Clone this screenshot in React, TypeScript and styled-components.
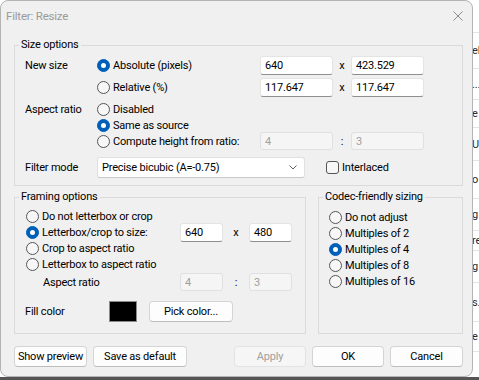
import React from "react";
import styled, { createGlobalStyle } from "styled-components";

const GlobalStyle = createGlobalStyle`
  html, body {
    margin: 0;
    padding: 0;
  }
  body {
    width: 479px;
    height: 380px;
    overflow: hidden;
    background: #ffffff;
    font-family: Roboto, "Noto Sans", sans-serif;
    font-size: 11px;
    letter-spacing: -0.2px;
    color: #000;
  }
`;

const Desktop = styled.div`
  position: relative;
  width: 479px;
  height: 380px;
  overflow: hidden;
`;

const Backdrop = styled.div`
  display: flex;
  flex-direction: column;
  height: 100%;
`;

const BackList = styled.div`
  flex: 1;
  display: flex;
  flex-direction: column;
  background: #fff;
`;

const BackRow = styled.div<{ $h: number }>`
  height: ${(p) => p.$h}px;
  flex: 0 0 auto;
  box-sizing: border-box;
  border-bottom: 1px solid #e4e4e4;
  padding-left: 472px;
  display: flex;
  align-items: center;
  white-space: nowrap;
  font-size: 11px;
  color: #2a2a2a;
`;

const Taskbar = styled.div`
  height: 3px;
  background: #555;
`;

const Window = styled.div`
  position: absolute;
  left: 0;
  top: 0;
  width: 473px;
  height: 377px;
  box-sizing: border-box;
  background: #f0f0f0;
  border: 1px solid #b4b4b4;
  border-radius: 8px;
  display: flex;
  flex-direction: column;
`;

const TitleBar = styled.div`
  height: 29px;
  display: flex;
  align-items: center;
  justify-content: space-between;
  padding: 0 9px 0 5px;
`;

const Title = styled.span`
  font-size: 11.5px;
  color: #9a9a9a;
`;

const Body = styled.div`
  padding: 7px 9px 0 13px;
  display: flex;
  flex-direction: column;
`;

const Group = styled.fieldset<{ $w?: number }>`
  margin: 0;
  padding: 0;
  min-width: 0;
  border: 1px solid #dadada;
  ${(p) => (p.$w ? `width: ${p.$w}px; flex: 0 0 auto;` : "flex: 1;")}
  box-sizing: border-box;
`;

const Legend = styled.legend`
  margin-left: 4px;
  padding: 0 2px;
  line-height: 16px;
`;

const Row = styled.div<{ $h: number; $mt?: number; $pl?: number }>`
  display: flex;
  align-items: center;
  height: ${(p) => p.$h}px;
  margin-top: ${(p) => p.$mt ?? 0}px;
  padding-left: ${(p) => p.$pl ?? 0}px;
`;

const Label = styled.span<{ $w: number; $pl?: number }>`
  flex: 0 0 ${(p) => p.$w}px;
  box-sizing: border-box;
  padding-left: ${(p) => p.$pl ?? 0}px;
  white-space: nowrap;
`;

const RadioWrap = styled.label<{ $w?: number }>`
  display: flex;
  align-items: center;
  gap: 3px;
  white-space: nowrap;
  ${(p) => (p.$w ? `flex: 0 0 ${p.$w}px;` : "")}
`;

const RadioDot = styled.span<{ $checked?: boolean }>`
  box-sizing: border-box;
  flex: 0 0 13px;
  width: 13px;
  height: 13px;
  border-radius: 50%;
  border: 1px solid ${(p) => (p.$checked ? "#005fb8" : "#555")};
  background: ${(p) => (p.$checked ? "#005fb8" : "#f7f7f7")};
  display: flex;
  align-items: center;
  justify-content: center;

  &::after {
    content: "";
    display: ${(p) => (p.$checked ? "block" : "none")};
    width: 5px;
    height: 5px;
    border-radius: 50%;
    background: #fff;
  }
`;

const CheckBox = styled.span`
  box-sizing: border-box;
  width: 13px;
  height: 13px;
  border: 1px solid #555;
  border-radius: 3px;
  background: #f7f7f7;
  flex: 0 0 13px;
`;

const Field = styled.input<{ $w: number }>`
  box-sizing: border-box;
  width: ${(p) => p.$w}px;
  height: 19px;
  margin: -2px 0;
  padding: 0 4px;
  font: inherit;
  letter-spacing: inherit;
  color: #000;
  background: #fff;
  border: 1px solid #e4e4e4;
  border-bottom-color: #8f8f8f;
  border-radius: 3px;
  outline: none;

  &:disabled {
    height: 18px;
    color: #a0a0a0;
    background: #f5f5f5;
    border-color: #e0e0e0;
  }
`;

const Sep = styled.span<{ $w: number }>`
  flex: 0 0 ${(p) => p.$w}px;
  text-align: center;
`;

const Select = styled.div`
  box-sizing: border-box;
  width: 208px;
  height: 21px;
  display: flex;
  align-items: center;
  justify-content: space-between;
  padding: 0 7px 0 4px;
  background: #fff;
  border: 1px solid #e0e0e0;
  border-bottom-color: #c8c8c8;
  border-radius: 3px;
`;

const CheckWrap = styled.label`
  display: flex;
  align-items: center;
  gap: 3px;
  margin-left: 21px;
`;

const Columns = styled.div`
  display: flex;
  gap: 12px;
  margin-top: 3px;
`;

const Swatch = styled.div`
  box-sizing: border-box;
  width: 28px;
  height: 21px;
  background: #000;
  border: 1px solid #8a8a8a;
  margin-left: 10px;
`;

const Button = styled.button<{ $w: number }>`
  box-sizing: border-box;
  width: ${(p) => p.$w}px;
  height: 21px;
  padding: 0;
  font: inherit;
  letter-spacing: inherit;
  color: #000;
  background: #fdfdfd;
  border: 1px solid #d4d4d4;
  border-bottom-color: #bdbdbd;
  border-radius: 4px;

  &:disabled {
    color: #a0a0a0;
    background: #f6f6f6;
    border-color: #e3e3e3;
  }
`;

const ButtonBar = styled.div`
  display: flex;
  align-items: center;
  gap: 6px;
  margin-top: 12px;
`;

const Spacer = styled.div`
  flex: 1;
`;

const Radio = ({ label, checked, w }: { label: string; checked?: boolean; w?: number }) => (
  <RadioWrap $w={w}>
    <RadioDot $checked={checked} />
    <span>{label}</span>
  </RadioWrap>
);

const backRows: [number, string][] = [
  [33, ""],
  [36, "el"],
  [31, "..."],
  [28, "e"],
  [33, "U"],
  [38, "o"],
  [32, "g"],
  [20, "re"],
  [32, "g"],
  [39, "s."],
  [30, "e"],
];

export default function App() {
  return (
    <Desktop>
      <GlobalStyle />
      <Backdrop>
        <BackList>
          {backRows.map(([h, t], i) => (
            <BackRow key={i} $h={h}>
              {t}
            </BackRow>
          ))}
        </BackList>
        <Taskbar />
      </Backdrop>

      <Window>
        <TitleBar>
          <Title>Filter: Resize</Title>
          <svg width="10" height="10" viewBox="0 0 10 10">
            <path d="M0.5 0.5 L9.5 9.5 M9.5 0.5 L0.5 9.5" stroke="#8a8a8a" strokeWidth="1" />
          </svg>
        </TitleBar>

        <Body>
          <Group>
            <Legend>Size options</Legend>
            <Row $h={22} $mt={1}>
              <Label $w={82} $pl={10}>New size</Label>
              <Radio label="Absolute (pixels)" checked w={163} />
              <Field $w={73} readOnly value="640" />
              <Sep $w={18}>x</Sep>
              <Field $w={73} readOnly value="423.529" />
            </Row>
            <Row $h={22}>
              <Label $w={82} />
              <Radio label="Relative (%)" w={163} />
              <Field $w={73} readOnly value="117.647" />
              <Sep $w={18}>x</Sep>
              <Field $w={73} readOnly value="117.647" />
            </Row>
            <Row $h={16} $mt={3}>
              <Label $w={82} $pl={10}>Aspect ratio</Label>
              <Radio label="Disabled" />
            </Row>
            <Row $h={16}>
              <Label $w={82} />
              <Radio label="Same as source" checked />
            </Row>
            <Row $h={16}>
              <Label $w={82} />
              <Radio label="Compute height from ratio:" w={163} />
              <Field $w={73} disabled value="4" />
              <Sep $w={18}>:</Sep>
              <Field $w={73} disabled value="3" />
            </Row>
            <Row $h={20} $mt={8} style={{ marginBottom: 8 }}>
              <Label $w={82} $pl={10}>Filter mode</Label>
              <Select>
                <span>Precise bicubic (A=-0.75)</span>
                <svg width="8" height="5" viewBox="0 0 8 5">
                  <path d="M0.5 0.5 L4 4 L7.5 0.5" fill="none" stroke="#606060" strokeWidth="1" />
                </svg>
              </Select>
              <CheckWrap>
                <CheckBox />
                <span>Interlaced</span>
              </CheckWrap>
            </Row>
          </Group>

          <Columns>
            <Group $w={292}>
              <Legend>Framing options</Legend>
              <Row $h={16} $mt={3} $pl={11}>
                <Radio label="Do not letterbox or crop" />
              </Row>
              <Row $h={16} $pl={11}>
                <Radio label="Letterbox/crop to size:" checked w={154} />
                <Field $w={43} readOnly value="640" />
                <Sep $w={26}>x</Sep>
                <Field $w={43} readOnly value="480" />
              </Row>
              <Row $h={16} $pl={11}>
                <Radio label="Crop to aspect ratio" />
              </Row>
              <Row $h={16} $pl={11}>
                <Radio label="Letterbox to aspect ratio" />
              </Row>
              <Row $h={20} $pl={11}>
                <Label $w={154} $pl={17}>Aspect ratio</Label>
                <Field $w={43} disabled value="4" />
                <Sep $w={26}>:</Sep>
                <Field $w={43} disabled value="3" />
              </Row>
              <Row $h={23} $mt={8} $pl={10} style={{ marginBottom: 10 }}>
                <Label $w={74}>Fill color</Label>
                <Swatch />
                <Button $w={84} style={{ marginLeft: 12 }}>Pick color...</Button>
              </Row>
            </Group>

            <Group>
              <Legend>Codec-friendly sizing</Legend>
              <Row $h={16} $mt={4} $pl={10}>
                <Radio label="Do not adjust" />
              </Row>
              <Row $h={16} $pl={10}>
                <Radio label="Multiples of 2" />
              </Row>
              <Row $h={16} $pl={10}>
                <Radio label="Multiples of 4" checked />
              </Row>
              <Row $h={16} $pl={10}>
                <Radio label="Multiples of 8" />
              </Row>
              <Row $h={16} $pl={10}>
                <Radio label="Multiples of 16" />
              </Row>
            </Group>
          </Columns>

          <ButtonBar>
            <Button $w={73}>Show preview</Button>
            <Button $w={94}>Save as default</Button>
            <Spacer />
            <Button $w={72} disabled>Apply</Button>
            <Button $w={72}>OK</Button>
            <Button $w={73}>Cancel</Button>
          </ButtonBar>
        </Body>
      </Window>
    </Desktop>
  );
}
